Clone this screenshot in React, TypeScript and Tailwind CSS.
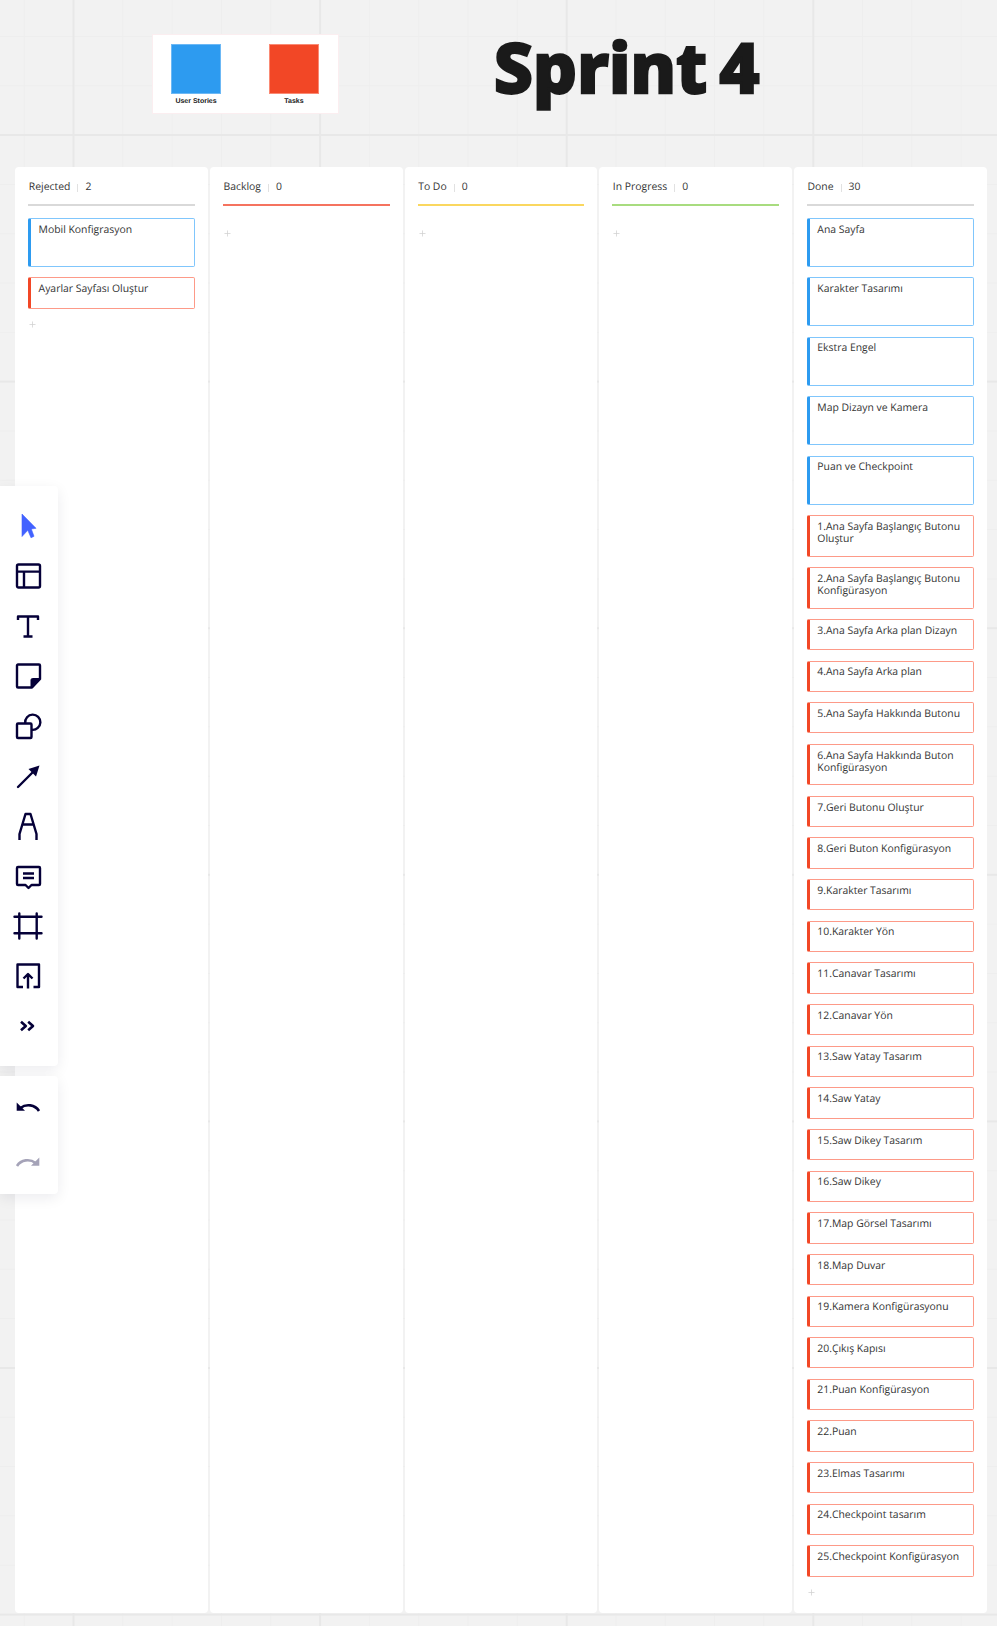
import { Plus } from 'lucide-react'

type Kind = 'story' | 'task' | 'task2'

interface Card {
  title: string
  kind: Kind
}

interface Column {
  name: string
  count: number
  line: string
  cards: Card[]
}

const stories = ['Ana Sayfa', 'Karakter Tasarımı', 'Ekstra Engel', 'Map Dizayn ve Kamera', 'Puan ve Checkpoint']

const doneTasks: Card[] = [
  { title: '1.Ana Sayfa Başlangıç Butonu Oluştur', kind: 'task2' },
  { title: '2.Ana Sayfa Başlangıç Butonu Konfigürasyon', kind: 'task2' },
  { title: '3.Ana Sayfa Arka plan Dizayn', kind: 'task' },
  { title: '4.Ana Sayfa Arka plan', kind: 'task' },
  { title: '5.Ana Sayfa Hakkında Butonu', kind: 'task' },
  { title: '6.Ana Sayfa Hakkında Buton Konfigürasyon', kind: 'task2' },
  { title: '7.Geri Butonu Oluştur', kind: 'task' },
  { title: '8.Geri Buton Konfigürasyon', kind: 'task' },
  { title: '9.Karakter Tasarımı', kind: 'task' },
  { title: '10.Karakter Yön', kind: 'task' },
  { title: '11.Canavar Tasarımı', kind: 'task' },
  { title: '12.Canavar Yön', kind: 'task' },
  { title: '13.Saw Yatay Tasarım', kind: 'task' },
  { title: '14.Saw Yatay', kind: 'task' },
  { title: '15.Saw Dikey Tasarım', kind: 'task' },
  { title: '16.Saw Dikey', kind: 'task' },
  { title: '17.Map Görsel Tasarımı', kind: 'task' },
  { title: '18.Map Duvar', kind: 'task' },
  { title: '19.Kamera Konfigürasyonu', kind: 'task' },
  { title: '20.Çıkış Kapısı', kind: 'task' },
  { title: '21.Puan Konfigürasyon', kind: 'task' },
  { title: '22.Puan', kind: 'task' },
  { title: '23.Elmas Tasarımı', kind: 'task' },
  { title: '24.Checkpoint tasarım', kind: 'task' },
  { title: '25.Checkpoint Konfigürasyon', kind: 'task' },
]

const columns: Column[] = [
  {
    name: 'Rejected',
    count: 2,
    line: 'bg-[#d9d9d9]',
    cards: [
      { title: 'Mobil Konfigrasyon', kind: 'story' },
      { title: 'Ayarlar Sayfası Oluştur', kind: 'task' },
    ],
  },
  { name: 'Backlog', count: 0, line: 'bg-[#f5735f]', cards: [] },
  { name: 'To Do', count: 0, line: 'bg-[#fad75f]', cards: [] },
  { name: 'In Progress', count: 0, line: 'bg-[#a8dc7f]', cards: [] },
  {
    name: 'Done',
    count: 30,
    line: 'bg-[#d9d9d9]',
    cards: [...stories.map((title): Card => ({ title, kind: 'story' })), ...doneTasks],
  },
]

const kindClass: Record<Kind, string> = {
  story: 'h-[49.05px] border-[#80c6fc] border-l-[#2d9bf0]',
  task: 'h-[31.3px] border-[#fd9a88] border-l-[#f24726]',
  task2: 'h-[41.65px] border-[#fd9a88] border-l-[#f24726]',
}

function KanbanCard({ card }: { card: Card }) {
  return (
    <div className={`rounded-[2px] border border-l-[3px] bg-white pl-[7.3px] pr-1 pt-[4.7px] text-[10.4px] leading-[12.8px] text-[#333333] ${kindClass[card.kind]}`}>
      {card.title}
    </div>
  )
}

function KanbanColumn({ column }: { column: Column }) {
  const empty = column.cards.length === 0
  return (
    <div className="flex w-[192.7px] flex-col rounded-[4px] bg-white px-[13px] pt-[14px]">
      <div className="flex h-[13px] items-center pl-[0.5px] text-[10.4px] text-[#333333]">
        <span>{column.name}</span>
        <span className="mx-[7px] h-[8px] w-px bg-[#e1e1e1]" />
        <span>{column.count}</span>
      </div>
      <div className={`mt-[10px] h-[1.6px] ${column.line}`} />
      <div className="mt-[12.4px] flex flex-col gap-[10.35px]">
        {column.cards.map((card) => (
          <KanbanCard key={card.title} card={card} />
        ))}
      </div>
      <Plus size={9} strokeWidth={2} className={`text-[#d0d0d0] ${empty ? 'mt-[11px]' : 'mt-[11.5px]'}`} />
    </div>
  )
}

const ink = '#050038'

function Icon({ children }: { children: React.ReactNode }) {
  return (
    <div className="flex h-[50px] w-full items-center justify-center pr-[2px]">
      <svg width="26" height="26" viewBox="0 0 26 26" fill="none" stroke={ink} strokeWidth="2.4" strokeLinejoin="round" className="overflow-visible">
        {children}
      </svg>
    </div>
  )
}

function Toolbar() {
  return (
    <div className="absolute left-0 top-[486px] w-[58px]">
      <div className="rounded-r-[4px] bg-white py-[15px] shadow-[0_4px_14px_rgba(5,0,56,0.08)]">
        <Icon>
          <path d="M7 1 L21 15.3 L16.3 16 L19 23.3 L16 24.8 L12.8 17.3 L7 23.5 Z" fill="#4262ff" stroke="#4262ff" strokeWidth="0.6" />
        </Icon>
        <Icon>
          <rect x="2" y="1.5" width="23" height="23" rx="1.5" />
          <path d="M2 8.6 H25 M9 8.6 V24.5" />
        </Icon>
        <Icon>
          <path d="M3 7 V3.5 H23 V7 M13 3.5 V23.5 M8.5 23.5 H17.5" />
        </Icon>
        <Icon>
          <path d="M3 1.5 H24 A1 1 0 0 1 25 2.5 V16 L17 24.5 H3 A1 1 0 0 1 2 23.5 V2.5 A1 1 0 0 1 3 1.5 Z" />
          <path d="M25 15.5 H17.5 A1.5 1.5 0 0 0 16 17 V24.5 Z" fill={ink} strokeWidth="1" />
        </Icon>
        <Icon>
          <rect x="2" y="10.5" width="14.5" height="14.5" rx="1" />
          <path d="M10.2 10 A7.6 7.6 0 1 1 17 16.8" />
        </Icon>
        <Icon>
          <path d="M3 24 L19 8" strokeLinecap="round" />
          <path d="M24.5 2.5 L13.5 6 L21 13.5 Z" fill={ink} stroke="none" />
        </Icon>
        <Icon>
          <path d="M4.5 27 V21 L10.5 1 H15.5 L21.5 21 V27 M8 11.5 H18" />
        </Icon>
        <Icon>
          <path d="M3 4 H24 A1 1 0 0 1 25 5 V21 A1 1 0 0 1 24 22 H16.5 L13.5 25 L10.5 22 H3 A1 1 0 0 1 2 21 V5 A1 1 0 0 1 3 4 Z" />
          <path d="M8 10.5 H19 M8 15 H19" />
        </Icon>
        <Icon>
          <path d="M4.3 0.5 V25.5 M21.7 0.5 V25.5 M-0.5 3.7 H26.5 M-0.5 20.3 H26.5" strokeLinecap="round" />
        </Icon>
        <Icon>
          <path d="M8 24 H2.5 V1.5 H24 V24 H18.5" />
          <path d="M13 25.5 V11 M8.5 15.5 L13 11 L17.5 15.5" />
        </Icon>
        <Icon>
          <path d="M6 8.8 L10.8 13 L6 17.2 M13.2 8.8 L18 13 L13.2 17.2" strokeWidth="2.6" />
        </Icon>
      </div>
      <div className="mt-[10px] flex h-[118px] flex-col items-center rounded-r-[4px] bg-white pr-[2px] pt-[19px] shadow-[0_4px_14px_rgba(5,0,56,0.08)]">
        <svg width="26" height="26" viewBox="0 0 26 26" fill="none" stroke={ink} strokeWidth="2.6">
          <path d="M24 16 C20 9.5 11 8.5 5.5 13" />
          <path d="M1.7 7.5 V15.8 H10 Z" fill={ink} stroke="none" />
        </svg>
        <svg width="26" height="26" viewBox="0 0 26 26" fill="none" stroke="#a5a3b8" strokeWidth="2.6" className="mt-[28px]">
          <path d="M2 17 C6 10.5 15 9.5 20.5 14" />
          <path d="M24.3 8.5 V16.8 H16 Z" fill="#a5a3b8" stroke="none" />
        </svg>
      </div>
    </div>
  )
}

export default function App() {
  return (
    <div className="relative h-[1626px] w-[997px] overflow-hidden bg-[#f2f2f2] bg-[image:linear-gradient(#e8e8e8_2px,transparent_2px),linear-gradient(90deg,#e8e8e8_2px,transparent_2px),linear-gradient(#eeeeee_1px,transparent_1px),linear-gradient(90deg,#eeeeee_1px,transparent_1px)] bg-[size:246.6px_246.6px,246.6px_246.6px,49.32px_49.32px,49.32px_49.32px] bg-[position:0_134px,72.5px_0,0_36px,23.7px_0] font-['Open_Sans',sans-serif] [text-rendering:geometricPrecision]">
      <div className="flex h-[167px] items-start">
        <div className="ml-[152px] mt-[34px] flex h-[80px] w-[187px] border border-[#fbeef0] bg-white pl-[18px] pt-[8.5px]">
          <div className="flex w-[50px] flex-col items-center">
            <div className="h-[50px] w-[50px] border border-[#6cb8f5] bg-[#2d9bf0]" />
            <span className="mt-[4.5px] whitespace-nowrap font-['Liberation_Sans',sans-serif] text-[7px] font-bold leading-[8px] text-[#1a1a1a]">User Stories</span>
          </div>
          <div className="ml-[48px] flex w-[50px] flex-col items-center">
            <div className="h-[50px] w-[50px] border border-[#fa8a74] bg-[#f24726]" />
            <span className="mt-[4.5px] whitespace-nowrap font-['Liberation_Sans',sans-serif] text-[7px] font-bold leading-[8px] text-[#1a1a1a]">Tasks</span>
          </div>
        </div>
        <h1 className="ml-[155px] mt-[25px] whitespace-nowrap font-['Noto_Sans',sans-serif] text-[69px] font-extrabold leading-[84px] tracking-[0.2px] text-[#1a1a1a] [word-spacing:-6px] [-webkit-text-stroke:2.5px_#1a1a1a]">
          Sprint 4
        </h1>
      </div>
      <div className="flex h-[1446px] items-stretch gap-[2px] pl-[15.3px]">
        {columns.map((column) => (
          <KanbanColumn key={column.name} column={column} />
        ))}
      </div>
      <Toolbar />
    </div>
  )
}
